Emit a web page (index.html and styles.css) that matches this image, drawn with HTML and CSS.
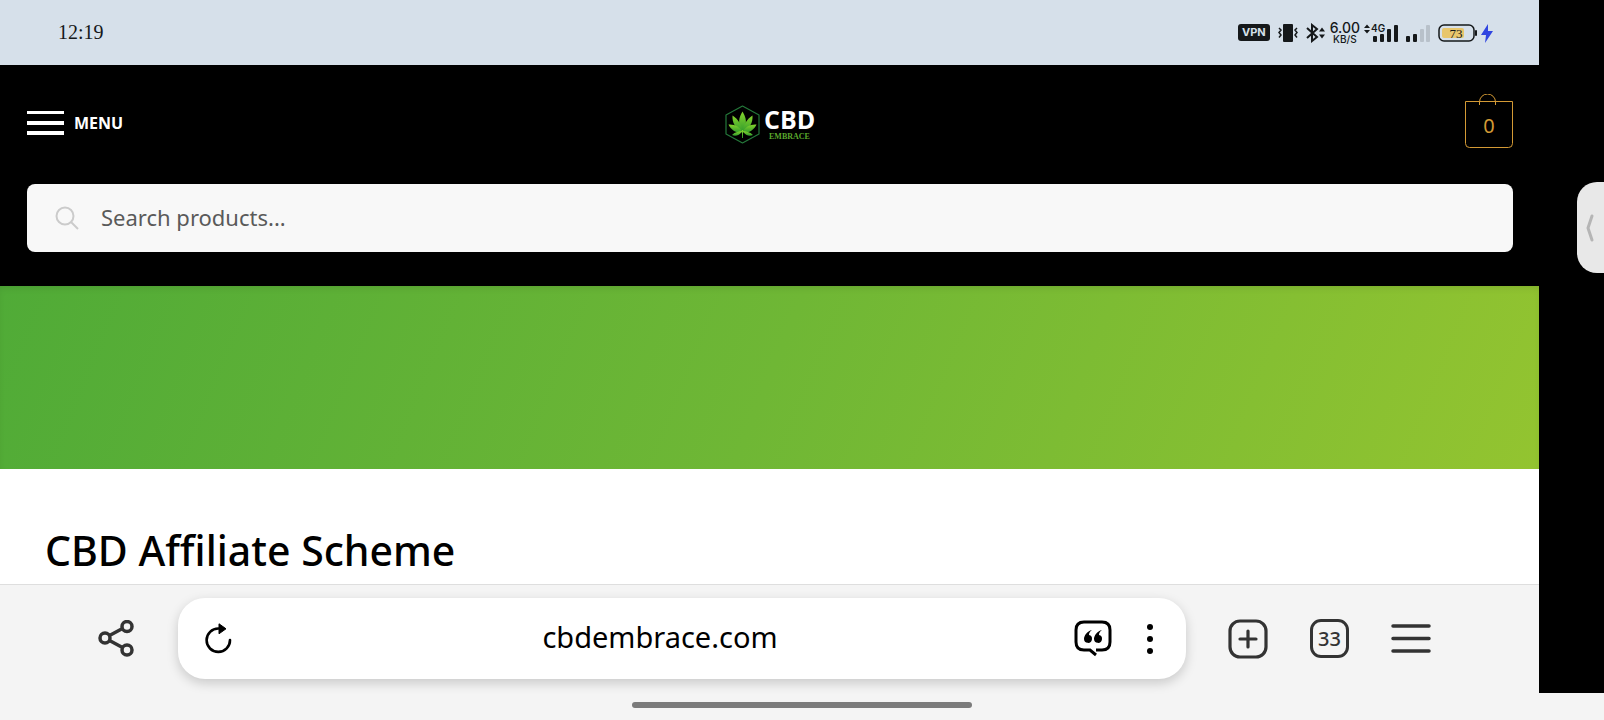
FILE: index.html
```html
<!DOCTYPE html>
<html lang="en">
<head>
  <meta charset="UTF-8">
  <meta name="viewport" content="width=device-width, initial-scale=1.0">
  <title>CBD Affiliate Scheme</title>
  <link rel="stylesheet" href="styles.css">
</head>
<body>
  <div class="device">
    <div class="screen">
      <div class="status-bar">
        <time class="clock">12:19</time>
        <div class="status-icons">
          <span class="vpn">VPN</span>
          <svg class="vibrate" width="20" height="20" viewBox="0 0 20 20" fill="none" stroke="#15181a" stroke-width="2">
            <rect x="5" y="1" width="10" height="18" rx="1" fill="#15181a" stroke="none"/>
            <path d="M1 5l2 2-2 2.500 2 2.500-2 2.500M19 5l-2 2 2 2.500-2 2.500 2 2.500" stroke-width="1.500"/>
          </svg>
          <svg class="bluetooth" width="20" height="20" viewBox="0 0 20 20" fill="none" stroke="#15181a" stroke-width="2">
            <path d="M1 5l10 9-5 4V2l5 4-10 9"/>
            <path d="M13 8.500l3-4 3 4zM13 11.500l3 4 3-4z" fill="#15181a" stroke="none"/>
          </svg>
          <span class="speed"><b>6.00</b><small>KB/S</small></span>
          <svg class="signal" width="34" height="20" viewBox="0 0 34 20" fill="#15181a">
            <path d="M0 5l3-3.500L6 5zM0 7l3 3.500L6 7z"/>
            <text x="7" y="9" class="network">4G</text>
            <rect x="9" y="13" width="4" height="6" rx="1"/>
            <rect x="16" y="11" width="4" height="8" rx="1"/>
            <rect x="23" y="6" width="4" height="13" rx="1"/>
            <rect x="30" y="2" width="4" height="17" rx="1"/>
          </svg>
          <svg class="signal" width="24" height="20" viewBox="0 0 24 20" fill="#15181a">
            <rect x="0" y="13" width="4" height="6" rx="1"/>
            <rect x="7" y="11" width="4" height="8" rx="1"/>
            <rect x="14" y="6" width="4" height="13" rx="1" fill="#b8c1ca"/>
            <rect x="20" y="2" width="4" height="17" rx="1" fill="#b8c1ca"/>
          </svg>
          <svg class="battery" width="40" height="20" viewBox="0 0 40 20">
            <rect x="1" y="2" width="35" height="16" rx="5" fill="none" stroke="#15181a" stroke-width="1.500"/>
            <rect x="4" y="5" width="22" height="10" rx="2" fill="#e8c66c"/>
            <rect x="37" y="7" width="2" height="6" rx="1" fill="#15181a"/>
            <text x="18" y="15" text-anchor="middle" class="charge">73</text>
          </svg>
          <svg class="bolt" width="12" height="20" viewBox="0 0 12 20" fill="#3045e0">
            <path d="M7 1L0 12h5l-1 8 8-12H7z"/>
          </svg>
        </div>
      </div>

      <header class="header">
        <div class="header-top">
          <button class="menu" type="button">
            <svg width="37" height="25" viewBox="0 0 37 25" fill="#fff" aria-hidden="true">
              <path d="M0 0h37v3H0zM0 10h37v4H0zM0 20h37v4H0z"/>
            </svg>
            Menu
          </button>
          <a class="logo" href="#" aria-label="CBD Embrace">
            <svg width="92" height="48" viewBox="0 0 92 48">
              <defs>
                <linearGradient id="leaf" x1="0" y1="0" x2="0" y2="1">
                  <stop offset="0" stop-color="#86d42c"/>
                  <stop offset="1" stop-color="#2f9a2c"/>
                </linearGradient>
              </defs>
              <path d="M18.500 6L35 15v19l-16.500 9L2 34V15z" fill="none" stroke="#24783a" stroke-width="1.200" stroke-linejoin="round"/>
              <g fill="url(#leaf)">
                <path d="M18.500 32C13 24 15 17 18.500 11.500 22 17 24 24 18.500 32z"/>
                <path d="M18.500 32C11 29 8 22 8.500 15.500 14 19 18 25 18.500 32z"/>
                <path d="M18.500 32C26 29 29 22 28.500 15.500 23 19 19 25 18.500 32z"/>
                <path d="M18.500 32C13 34 7 30 4.500 24.500 11 24 16 27 18.500 32z"/>
                <path d="M18.500 32C24 34 30 30 32.500 24.500 26 24 21 27 18.500 32z"/>
                <path d="M18.500 31C15 36 11 36.500 8 35 11 32 15 31 18.500 31zM18.500 31C22 36 26 36.500 29 35 26 32 22 31 18.500 31z"/>
                <path d="M18 30h1v8h-1z"/>
              </g>
              <text x="40" y="29" class="logo-name">CBD</text>
              <text x="45" y="39" class="logo-sub">EMBRACE</text>
            </svg>
          </a>
          <button class="cart" type="button" aria-label="Cart">
            <svg width="48" height="55" viewBox="0 0 48 55" fill="none" stroke="#d49a35">
              <path d="M.5 7.500h47v42a4 4 0 0 1-4 4h-39a4 4 0 0 1-4-4z"/>
              <path d="M14.500 11V8a8 8 0 0 1 16 0v3"/>
              <text x="24" y="39" text-anchor="middle" class="cart-count">0</text>
            </svg>
          </button>
        </div>
        <form class="search">
          <svg width="24" height="24" viewBox="0 0 24 24" fill="none" stroke="#cbcbcb" stroke-width="2" aria-hidden="true">
            <circle cx="10" cy="10" r="8.500"/>
            <path d="M16 16l7 7"/>
          </svg>
          <input type="search" placeholder="Search products..." aria-label="Search products">
        </form>
      </header>

      <div class="hero"></div>

      <main class="content">
        <h1>CBD Affiliate Scheme</h1>
      </main>

      <nav class="toolbar">
        <button type="button" aria-label="Share">
          <svg width="38" height="38" viewBox="0 0 38 38" fill="none" stroke="#333" stroke-width="3.500">
            <circle cx="7" cy="18" r="5"/>
            <circle cx="29" cy="6.500" r="5"/>
            <circle cx="29" cy="30" r="5"/>
            <path d="M11.500 15.500l13-7M11.500 20.500l13 7"/>
          </svg>
        </button>
        <div class="address">
          <button type="button" aria-label="Reload">
            <svg width="27" height="32" viewBox="0 0 27 32" fill="none" stroke="#000" stroke-width="2.600">
              <path d="M25 17A11.700 11.700 0 1 1 13.500 5.500" stroke-linecap="round"/>
              <path d="M14 .8L21 5.800l-7 5z" fill="#000" stroke-width="1" stroke-linejoin="round"/>
            </svg>
          </button>
          <span class="url">cbdembrace.com</span>
          <button type="button" aria-label="Reader">
            <svg width="38" height="38" viewBox="0 0 38 38">
              <path d="M22 30h6q8 0 8-8V10q0-8-8-8H10q-8 0-8 8v12q0 8 8 8h6l6 5" fill="none" stroke="#000" stroke-width="3"/>
              <path d="M18 10c-5 1-8 6-8 9a4 4 0 1 0 5-4c0-2 1-4 3-5zM28 10c-5 1-8 6-8 9a4 4 0 1 0 5-4c0-2 1-4 3-5z"/>
            </svg>
          </button>
          <button type="button" aria-label="Page options">
            <svg width="8" height="32" viewBox="0 0 8 32">
              <circle cx="4" cy="4" r="3"/>
              <circle cx="4" cy="16" r="3"/>
              <circle cx="4" cy="28" r="3"/>
            </svg>
          </button>
        </div>
        <button type="button" aria-label="New tab">
          <svg width="40" height="40" viewBox="0 0 40 40" fill="none" stroke="#333" stroke-width="3.200">
            <rect x="2" y="2" width="36" height="36" rx="10"/>
            <path d="M20 12v16M12 20h16" stroke-linecap="round"/>
          </svg>
        </button>
        <button class="tabs" type="button">33</button>
        <button type="button" aria-label="Browser menu">
          <svg width="40" height="30" viewBox="0 0 40 30" fill="none" stroke="#333" stroke-width="3.500" stroke-linecap="round">
            <path d="M2 2h36M2 14.500h36M2 27h36"/>
          </svg>
        </button>
      </nav>
    </div>

    <aside class="edge">
      <button class="handle" type="button" aria-label="Open side panel">
        <svg width="8" height="28" viewBox="0 0 8 28" fill="none" stroke="#b5b5b5" stroke-width="3" stroke-linecap="round" stroke-linejoin="round">
          <path d="M6 2L2 14l4 12"/>
        </svg>
      </button>
    </aside>
  </div>

  <div class="gesture"><span class="pill"></span></div>
</body>
</html>
```
FILE: styles.css
```css
* {
  box-sizing: border-box;
}

body {
  margin: 0;
  min-height: 100vh;
  display: flex;
  flex-direction: column;
  background: #f4f4f4;
  font-family: "Noto Sans", "Open Sans", sans-serif;
  color: #000;
}

button {
  display: flex;
  align-items: center;
  padding: 0;
  border: 0;
  background: none;
  color: inherit;
  font: inherit;
  cursor: pointer;
}

svg {
  display: block;
}

.device {
  flex: 1;
  display: flex;
}

.screen {
  flex: 1;
  min-width: 0;
  display: flex;
  flex-direction: column;
}

/* status bar */
.status-bar {
  display: flex;
  align-items: center;
  justify-content: space-between;
  height: 65px;
  padding: 0 46px 0 58px;
  background: #d6e0ea;
  color: #15181a;
}

.clock {
  font: 20px "Liberation Serif", serif;
}

.status-icons {
  display: flex;
  align-items: center;
  gap: 8px;
}

.vpn {
  padding: 0 4px;
  border-radius: 3px;
  background: #15181a;
  color: #d6e0ea;
  font: bold 11px/17px Inter, sans-serif;
}

.speed {
  display: flex;
  flex-direction: column;
  align-items: center;
  margin: 0 -4px;
  font-family: Inter, sans-serif;
}

.speed b {
  font-size: 14px;
  font-weight: 500;
  line-height: 12px;
}

.speed small {
  font-size: 10px;
  font-weight: 500;
  line-height: 10px;
}

.network {
  font: 600 10px Inter, sans-serif;
}

.charge {
  font: 13px "Liberation Serif", serif;
  fill: #15181a;
}

.battery {
  margin-right: -5px;
}

/* shop header */
.header {
  padding: 29px 26px 34px 27px;
  background: #000;
}

.header-top {
  display: grid;
  grid-template-columns: 1fr auto 1fr;
  align-items: end;
  margin-bottom: 35px;
}

.menu {
  gap: 10px;
  height: 52px;
  justify-self: start;
  color: #fff;
  font-size: 16px;
  font-weight: 700;
  text-transform: uppercase;
}

.logo {
  padding-bottom: 1px;
}

.logo-name {
  font: bold 25px "Open Sans", sans-serif;
  fill: #fff;
}

.logo-sub {
  font: bold 8px "Liberation Serif", serif;
  fill: #5aa82c;
}

.cart {
  justify-self: end;
}

.cart-count {
  font-size: 20px;
  fill: #d49a35;
  stroke: none;
}

.search {
  display: flex;
  align-items: center;
  gap: 22px;
  height: 68px;
  padding: 0 28px;
  border-radius: 8px;
  background: #f8f8f8;
}

.search input {
  flex: 1;
  padding: 0 0 2px;
  border: 0;
  outline: 0;
  background: none;
  font: 22px "Noto Sans", sans-serif;
}

.search input::placeholder {
  color: #5a5a5a;
}

.hero {
  height: 183px;
  background: linear-gradient(112deg, #50ab37, #6fb735 50%, #93c430);
  box-shadow: inset 0 4px 8px -4px rgba(0, 0, 0, 0.15);
}

.content {
  flex: 1;
  padding: 52px 45px 0;
  background: #fff;
}

.content h1 {
  margin: 0;
  font-size: 41px;
  font-weight: 500;
  line-height: 58px;
}

/* browser toolbar */
.toolbar {
  display: flex;
  align-items: center;
  gap: 42px;
  padding: 13px 108px 14px 98px;
  border-top: 1px solid #dedede;
  color: #333;
}

.address {
  flex: 1;
  display: flex;
  align-items: center;
  gap: 34px;
  height: 81px;
  padding: 0 32px 0 27px;
  border-radius: 27px;
  background: #fff;
  box-shadow: 0 4px 12px rgba(0, 0, 0, 0.18);
  color: #000;
}

.url {
  flex: 1;
  padding: 0 0 4px 14px;
  text-align: center;
  font-size: 29px;
}

.tabs {
  justify-content: center;
  width: 39px;
  height: 39px;
  border: 3px solid #333;
  border-radius: 11px;
  font-size: 20px;
  font-weight: 500;
}

/* right screen edge */
.edge {
  display: flex;
  align-items: flex-start;
  justify-content: flex-end;
  width: 65px;
  padding-top: 182px;
  background: #000;
}

.handle {
  width: 27px;
  height: 91px;
  padding-left: 9px;
  border-radius: 20px 0 0 20px;
  background: #e8e8e8;
}

.gesture {
  display: flex;
  align-items: center;
  justify-content: center;
  height: 27px;
}

.pill {
  width: 340px;
  height: 6px;
  margin-bottom: 3px;
  border-radius: 3px;
  background: #7b7b7b;
}
```
